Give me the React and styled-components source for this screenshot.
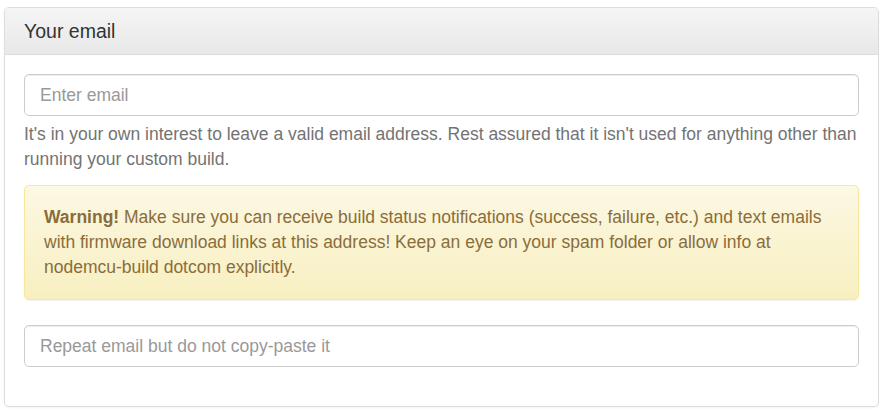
import React from 'react'
import styled, { createGlobalStyle } from 'styled-components'

const Global = createGlobalStyle`
  body {
    margin: 0;
    background: #fff;
    font-family: "Liberation Sans", Arial, sans-serif;
    font-size: 17.5px;
    line-height: 25px;
    color: #333;
  }
`

const Page = styled.div`
  padding: 7px 5px 4px 4px;
`

const Panel = styled.div`
  border: 1px solid #ddd;
  border-radius: 5px;
  background: #fff;
  box-shadow: 0 1px 2px rgba(0, 0, 0, 0.05);
  overflow: hidden;
`

const Heading = styled.div`
  padding: 12px 19px;
  border-bottom: 1px solid #ddd;
  background: linear-gradient(to bottom, #f5f5f5 0%, #e8e8e8 100%);
`

const Title = styled.h3`
  margin: 0;
  font-size: 19.5px;
  line-height: 22px;
  font-weight: 400;
  color: #333;
`

const Body = styled.div`
  padding: 19px 19px 20px 19px;
`

const Group = styled.div`
  margin-bottom: ${(p) => p.$last ? '19px' : '0'};
`

const Input = styled.input`
  display: block;
  box-sizing: border-box;
  width: 100%;
  height: 42px;
  padding: 8px 15px;
  font-family: inherit;
  font-size: 17.5px;
  color: #555;
  background: #fff;
  border: 1px solid #ccc;
  border-radius: 5px;
  box-shadow: inset 0 1px 1px rgba(0, 0, 0, 0.075);
  outline: none;
  &::placeholder {
    color: #999;
  }
`

const Help = styled.p`
  margin: 6px 0 13px;
  color: #737373;
`

const Alert = styled.div`
  padding: 19px;
  margin-bottom: 25px;
  border: 1px solid #f5e79e;
  border-radius: 5px;
  color: #8a6d3b;
  background: linear-gradient(to bottom, #fcf8e3 0%, #f8efc0 100%);
  box-shadow: inset 0 1px 0 rgba(255, 255, 255, 0.25), 0 1px 2px rgba(0, 0, 0, 0.05);
  strong {
    font-weight: 700;
  }
`

const App = () => (
  <Page>
    <Global />
    <Panel>
      <Heading>
        <Title>Your email</Title>
      </Heading>
      <Body>
        <Group>
          <Input type="email" placeholder="Enter email" />
          <Help>
            It's in your own interest to leave a valid email address. Rest assured that it isn't used
            for anything other than running your custom build.
          </Help>
        </Group>
        <Alert>
          <strong>Warning!</strong> Make sure you can receive build status notifications (success,
          failure, etc.) and text emails with firmware download links at this address! Keep an eye on
          your spam folder or allow info at nodemcu-build dotcom explicitly.
        </Alert>
        <Group $last>
          <Input type="email" placeholder="Repeat email but do not copy-paste it" />
        </Group>
      </Body>
    </Panel>
  </Page>
)

export default App
